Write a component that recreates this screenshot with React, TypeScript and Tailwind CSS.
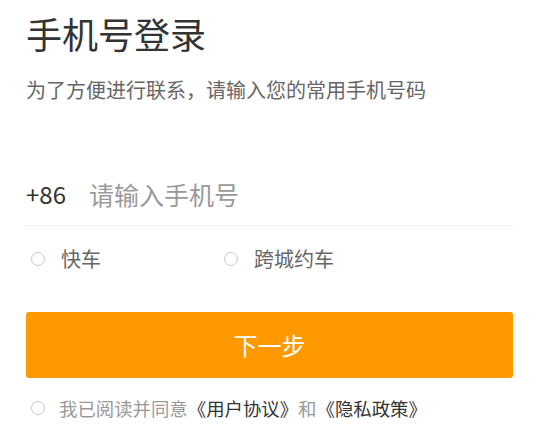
import React from "react";

function Circle() {
  return <span className="inline-block w-[14px] h-[14px] rounded-full border border-[#c8c8c8] bg-white shrink-0" />;
}

export default function App() {
  return (
    <div className="min-h-[428px] bg-white px-[26px] pt-[15px] font-['Noto_Sans_CJK_SC',sans-serif]">
      <h1 className="text-[36px] leading-[36px] text-[#333] font-normal">手机号登录</h1>
      <p className="mt-[29px] text-[20px] leading-[20px] text-[#666]">为了方便进行联系，请输入您的常用手机号码</p>
      <div className="mt-[63px] h-[63px] flex items-center border-b border-[#eeeeee]">
        <span className="text-[24px] leading-[24px] text-[#333]">+86</span>
        <input
          className="ml-[23px] flex-1 min-w-0 bg-transparent outline-none text-[25px] leading-[25px] text-[#333] placeholder:text-[#999] font-['Noto_Sans_CJK_SC',sans-serif]"
          placeholder="请输入手机号"
        />
      </div>
      <div className="h-[66px] flex items-center pl-[5px]">
        <label className="w-[193px] flex items-center gap-[16px]">
          <Circle />
          <span className="text-[20px] leading-[20px] text-[#666]">快车</span>
        </label>
        <label className="flex items-center gap-[16px]">
          <Circle />
          <span className="text-[20px] leading-[20px] text-[#666]">跨城约车</span>
        </label>
      </div>
      <button className="mt-[20px] w-full h-[66px] rounded-[3px] bg-[#ff9900] text-white text-[24px] leading-[24px] font-['Noto_Sans_CJK_SC',sans-serif]">
        下一步
      </button>
      <div className="mt-[15px] h-[30px] flex items-center pl-[5px] gap-[14px]">
        <Circle />
        <span className="text-[18.4px] leading-[18px] text-[#999] whitespace-nowrap">
          我已阅读并同意<span className="text-[#333]">《用户协议》</span>和<span className="text-[#333]">《隐私政策》</span>
        </span>
      </div>
    </div>
  );
}
